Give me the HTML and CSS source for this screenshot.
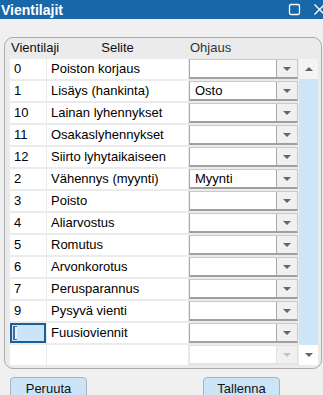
FILE: index.html
```html
<!DOCTYPE html>
<html lang="fi">
<head>
    <meta charset="UTF-8">
    <title>Vientilajit</title>
    <link rel="stylesheet" href="styles.css">
</head>
<body>
    <div class="titlebar">
        <span class="title">Vientilajit</span>
        <svg class="tb-icon tb-max" width="13" height="13" viewBox="0 0 13 13">
            <rect x="1.5" y="1.5" width="10" height="10" rx="1.5" fill="none" stroke="#fff" stroke-width="1.3"/>
        </svg>
        <svg class="tb-icon tb-close" width="13" height="13" viewBox="0 0 13 13">
            <path d="M1.5 1.5 L11.5 11.5 M11.5 1.5 L1.5 11.5" stroke="#fff" stroke-width="1.3"/>
        </svg>
    </div>

    <div class="grid-box">
        <div class="grid">
            <div class="head head-id">Vientilaji</div>
            <div class="head head-text">Selite</div>
            <div class="head head-combo">Ohjaus</div>
            <div class="head"></div>

            <div class="scrollbar">
                <div class="sb-btn sb-up"><span class="arrow-up"></span></div>
                <div class="sb-track"></div>
                <div class="sb-btn sb-down"><span class="arrow-down"></span></div>
            </div>

            <div class="cell">0</div>
            <div class="cell">Poiston korjaus</div>
            <div class="combo"><span class="combo-text"></span><span class="combo-btn"><span class="arrow-down"></span></span></div>

            <div class="cell">1</div>
            <div class="cell">Lisäys (hankinta)</div>
            <div class="combo"><span class="combo-text">Osto</span><span class="combo-btn"><span class="arrow-down"></span></span></div>

            <div class="cell">10</div>
            <div class="cell">Lainan lyhennykset</div>
            <div class="combo"><span class="combo-text"></span><span class="combo-btn"><span class="arrow-down"></span></span></div>

            <div class="cell">11</div>
            <div class="cell">Osakaslyhennykset</div>
            <div class="combo"><span class="combo-text"></span><span class="combo-btn"><span class="arrow-down"></span></span></div>

            <div class="cell">12</div>
            <div class="cell">Siirto lyhytaikaiseen</div>
            <div class="combo"><span class="combo-text"></span><span class="combo-btn"><span class="arrow-down"></span></span></div>

            <div class="cell">2</div>
            <div class="cell">Vähennys (myynti)</div>
            <div class="combo"><span class="combo-text">Myynti</span><span class="combo-btn"><span class="arrow-down"></span></span></div>

            <div class="cell">3</div>
            <div class="cell">Poisto</div>
            <div class="combo"><span class="combo-text"></span><span class="combo-btn"><span class="arrow-down"></span></span></div>

            <div class="cell">4</div>
            <div class="cell">Aliarvostus</div>
            <div class="combo"><span class="combo-text"></span><span class="combo-btn"><span class="arrow-down"></span></span></div>

            <div class="cell">5</div>
            <div class="cell">Romutus</div>
            <div class="combo"><span class="combo-text"></span><span class="combo-btn"><span class="arrow-down"></span></span></div>

            <div class="cell">6</div>
            <div class="cell">Arvonkorotus</div>
            <div class="combo"><span class="combo-text"></span><span class="combo-btn"><span class="arrow-down"></span></span></div>

            <div class="cell">7</div>
            <div class="cell">Perusparannus</div>
            <div class="combo"><span class="combo-text"></span><span class="combo-btn"><span class="arrow-down"></span></span></div>

            <div class="cell">9</div>
            <div class="cell">Pysyvä vienti</div>
            <div class="combo"><span class="combo-text"></span><span class="combo-btn"><span class="arrow-down"></span></span></div>

            <div class="cell cell-editing"><span class="caret"></span></div>
            <div class="cell">Fuusioviennit</div>
            <div class="combo"><span class="combo-text"></span><span class="combo-btn"><span class="arrow-down"></span></span></div>

            <div class="cell"></div>
            <div class="cell"></div>
            <div class="combo combo-new"><span class="combo-text"></span><span class="combo-btn"><span class="arrow-down"></span></span></div>
        </div>
    </div>

    <div class="actions">
        <button class="btn">Peruuta</button>
        <button class="btn btn-save">Tallenna</button>
    </div>
</body>
</html>
```

FILE: styles.css
```css
* {
    margin: 0;
    padding: 0;
    box-sizing: border-box;
}

body {
    font-family: 'Liberation Sans', Arial, sans-serif;
    font-size: 13px;
    background: #f0f0f0;
    color: #000;
    width: 323px;
    height: 395px;
    overflow: hidden;
}

.titlebar {
    height: 19px;
    background: #1867a8;
    display: flex;
    align-items: center;
    padding-left: 1px;
}

.title {
    color: #fff;
    font-weight: bold;
    font-size: 14px;
    flex: 1;
}

.tb-max {
    margin-right: 12px;
}

.tb-close {
    margin-right: -3px;
}

.grid-box {
    margin: 18px 0 0 4px;
    width: 318px;
    border: 1px solid #ababab;
    border-radius: 9px;
    background: #ebebeb;
    padding: 0 3px 3px 5px;
}

.grid {
    display: grid;
    grid-template-columns: 36px 141px 109px 19px;
    grid-template-rows: 19px;
    grid-auto-rows: 20px;
    column-gap: 1px;
    row-gap: 2px;
}

.head {
    line-height: 19px;
    color: #111;
}

.head-id {
    padding-left: 1px;
}

.head-text {
    text-align: center;
}

.head-combo {
    padding-left: 1px;
    color: #333;
}

.cell {
    background: #fff;
    line-height: 20px;
    padding-left: 4px;
    white-space: nowrap;
    overflow: hidden;
}

.cell-editing {
    background: #cce4f7;
    border: 2px solid #1b5e9c;
    padding-left: 1px;
    display: flex;
    align-items: center;
}

.caret {
    display: inline-block;
    width: 4px;
    height: 14px;
    border: 1px solid #4d6b94;
    border-left-width: 2px;
    border-right: none;
    background: #e9f1fa;
}

.combo {
    display: flex;
    background: #fff;
    border: 1px solid #c9c9c9;
    border-left-color: #a8a8a8;
    border-bottom: 2px solid #a0a0a0;
}

.combo-text {
    flex: 1;
    line-height: 17px;
    padding-left: 5px;
}

.combo-btn {
    width: 21px;
    background: #f0f0f0;
    border-left: 1px solid #a8a8a8;
    display: flex;
    align-items: center;
    justify-content: center;
}

.combo-new {
    border-color: #e3e3e3;
}

.combo-new .combo-btn {
    border-left-color: #e3e3e3;
}

.combo-new .arrow-down {
    border-top-color: #c4c4c4;
}

.arrow-down {
    width: 0;
    height: 0;
    border-left: 4px solid transparent;
    border-right: 4px solid transparent;
    border-top: 4px solid #5f6477;
}

.arrow-up {
    width: 0;
    height: 0;
    border-left: 4px solid transparent;
    border-right: 4px solid transparent;
    border-bottom: 4px solid #5f6477;
}

.scrollbar {
    grid-column: 4;
    grid-row: 2 / span 14;
    display: flex;
    flex-direction: column;
}

.sb-btn {
    height: 20px;
    display: flex;
    align-items: center;
    justify-content: center;
    background: #f4f4f4;
}

.sb-down {
    background: #fff;
}

.sb-track {
    flex: 1;
    background: #cde6f7;
}

.actions {
    display: flex;
    padding: 8px 0 0 10px;
}

.btn {
    width: 77px;
    height: 23px;
    font-family: inherit;
    font-size: 13px;
    color: #111;
    background: #cce4f7;
    border: 1px solid #a6b4c0;
    border-radius: 4px;
}

.btn-save {
    margin-left: 116px;
}
```
